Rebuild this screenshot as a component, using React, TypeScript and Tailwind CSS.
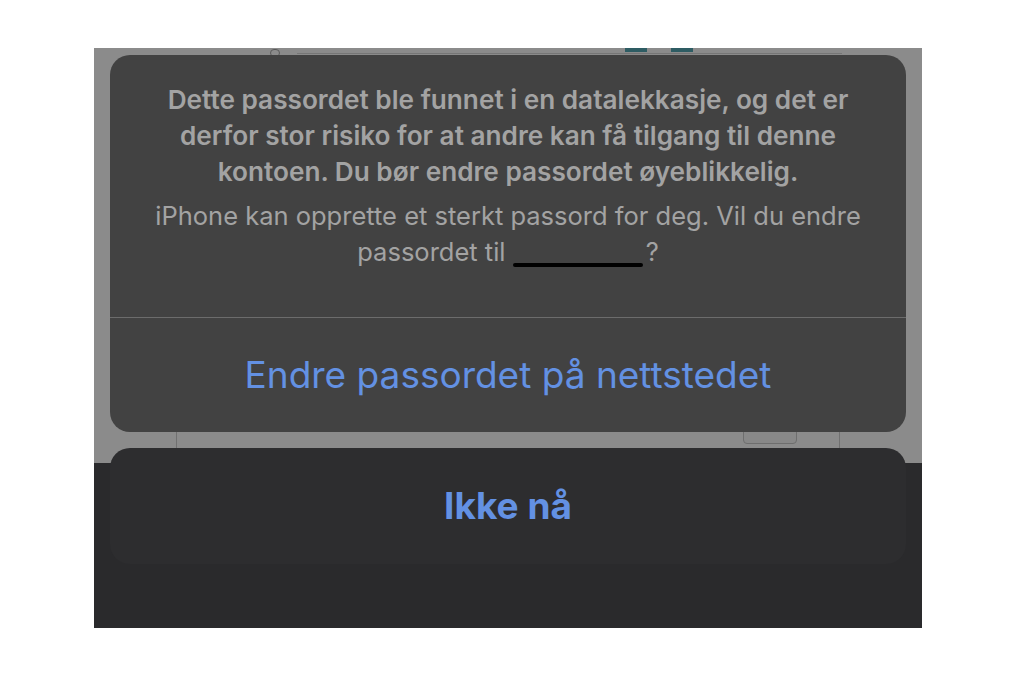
export default function App() {
  return (
    <div className="min-h-[685px] w-[1024px] bg-white font-['Inter','Noto_Sans',sans-serif]">
      <div className="h-[48px]" />
      {/* phone screen */}
      <div className="relative ml-[94px] h-[580px] w-[828px] overflow-hidden bg-[#8b8b8b]">
        {/* faint page content behind the sheet */}
        <div className="absolute left-[203px] right-[80px] top-[5px] h-px bg-[#767676]" />
        <div className="absolute left-[176px] top-[1px] h-[8px] w-[10px] rounded-full border border-[#5a5a5a]" />
        <div className="absolute left-[531px] top-0 h-[4px] w-[22px] bg-[#2e5c63]" />
        <div className="absolute left-[577px] top-0 h-[4px] w-[22px] bg-[#2e5c63]" />
        <div className="absolute left-[82px] top-[370px] h-[40px] w-px bg-[#707070]" />
        <div className="absolute left-[745px] top-[370px] h-[40px] w-px bg-[#707070]" />
        <div className="absolute left-[649px] top-[372px] h-[24px] w-[54px] overflow-hidden rounded-[4px] border border-[#6e6e6e] bg-[#888]">
          <div className="mx-auto -mt-[10px] h-[18px] w-[18px] rounded-full bg-[#3f5878]" />
        </div>
        {/* keyboard band */}
        <div className="absolute inset-x-0 bottom-0 top-[415px] bg-[#2a2a2c]" />

        <div className="relative flex flex-col gap-[16px] px-[16px] pt-[7px]">
          {/* action sheet */}
          <div className="flex h-[377px] flex-col rounded-[20px] bg-[#424242]">
            <div className="flex h-[262px] flex-col px-[34px] pt-[27px] text-center text-[#a3a3a3]">
              <p className="text-[26.2px] font-semibold leading-[36px]">
                Dette passordet ble funnet i en datalekkasje, og det er derfor stor risiko for at andre kan få tilgang til denne kontoen. Du bør endre passordet øyeblikkelig.
              </p>
              <p className="mt-[8px] text-[25.5px] leading-[36px]">
                iPhone kan opprette et sterkt passord for deg. Vil du endre passordet til{' '}
                <span className="mr-[3px] inline-block h-[4px] w-[130px] translate-y-[6px] rounded-full bg-black align-baseline" />?
              </p>
            </div>
            <div className="h-px bg-[#6c6c6c]" />
            <div className="flex flex-1 items-center justify-center pb-[2px] text-[37px] leading-none text-[#6391e3]">
              Endre passordet på nettstedet
            </div>
          </div>
          {/* cancel */}
          <div className="flex h-[116px] items-center justify-center rounded-[20px] bg-[#2d2d2f] text-[37px] font-bold text-[#6391e3]">
            Ikke nå
          </div>
        </div>
      </div>
    </div>
  );
}
